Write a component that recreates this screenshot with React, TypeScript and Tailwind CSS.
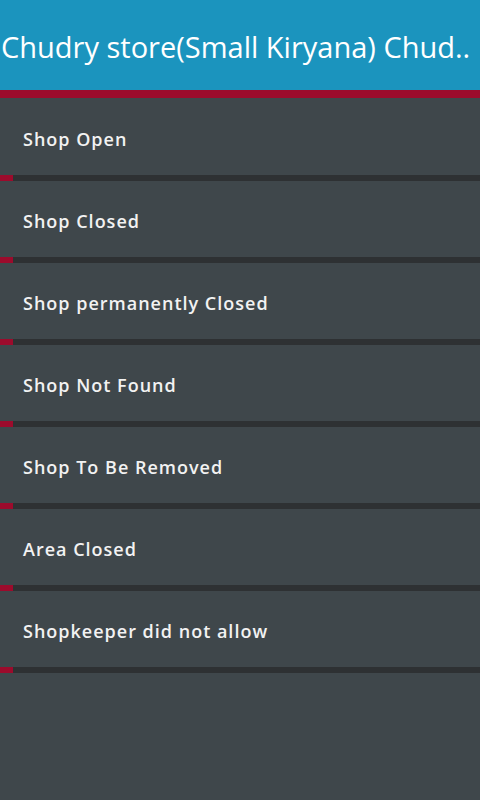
const reasons = [
  "Shop Open",
  "Shop Closed",
  "Shop permanently Closed",
  "Shop Not Found",
  "Shop To Be Removed",
  "Area Closed",
  "Shopkeeper did not allow",
];

export default function App() {
  return (
    <div
      className="flex h-[800px] w-[480px] flex-col overflow-hidden bg-[#3f474b]"
      style={{ fontFamily: '"Open Sans", "Liberation Sans", sans-serif' }}
    >
      <div className="flex h-[90px] shrink-0 items-center overflow-hidden whitespace-nowrap bg-[#1b94be] pt-[3px] text-[29px] font-medium text-white">
        <span className="pl-[1px]">Chudry store(Small Kiryana) Chud..</span>
      </div>
      <div className="h-2 shrink-0 bg-[#9c0b2c]" />
      <ul className="pt-px">
        {reasons.map((r) => (
          <li key={r}>
            <button className="flex h-[76px] w-full items-center px-[23px] pt-[5px] text-left text-[18px] font-semibold tracking-[1px] text-[#f2f2f2]">
              {r}
            </button>
            <div className="flex h-[6px]">
              <div className="w-[13px] bg-[#9c0b2c]" />
              <div className="flex-1 bg-[#2e3133]" />
            </div>
          </li>
        ))}
      </ul>
    </div>
  );
}
